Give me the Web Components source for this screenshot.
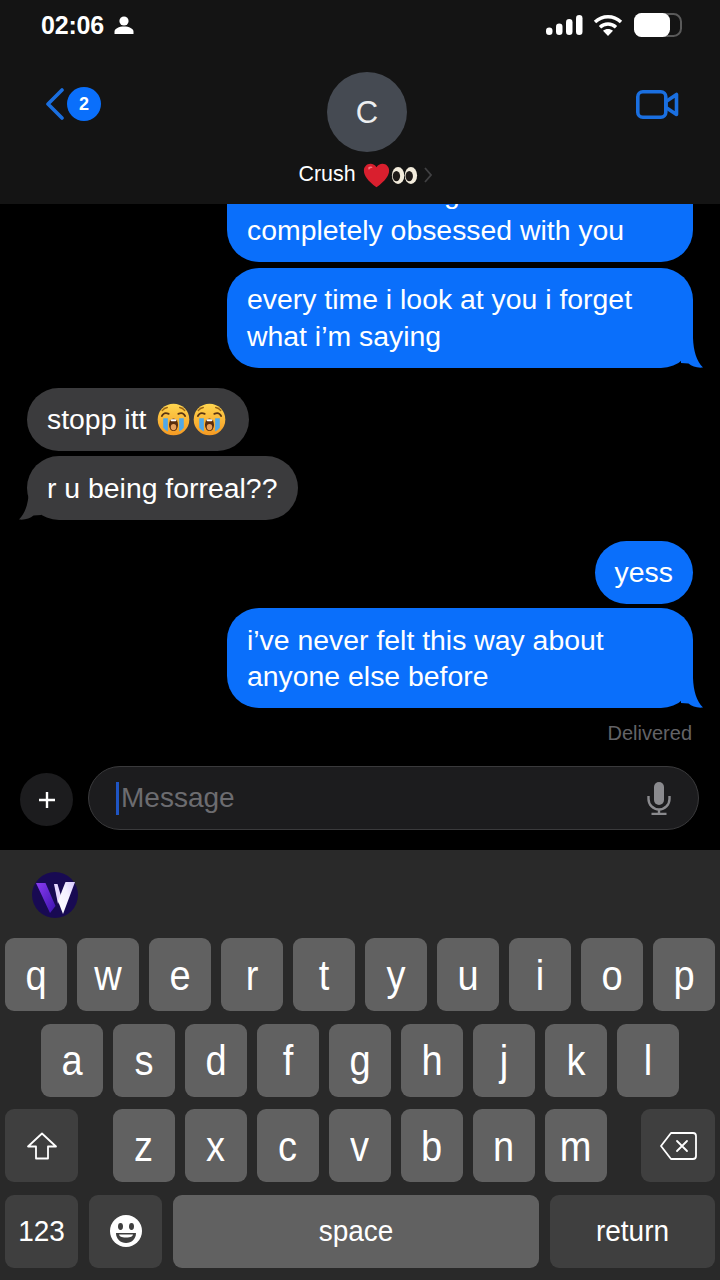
<!DOCTYPE html>
<html lang="en">
<head>
<meta charset="utf-8">
<title>Messages</title>
<style>
  html, body { margin: 0; background: #000; }
  body { font-family: "Liberation Sans", Arial, sans-serif; color: #fff; }
  chat-screen { width: 720px; height: 1280px; }
</style>
</head>
<body>
<chat-screen>
  <status-bar slot="top"></status-bar>
  <chat-header slot="top"></chat-header>

  <chat-bubble side="sent" hint="g">completely obsessed with you</chat-bubble>
  <chat-bubble side="sent" tail style="margin-top:1px">every time i look at you i forget<br>what i’m saying</chat-bubble>
  <chat-bubble side="received" style="margin-top:15px;padding-right:23px">stopp itt<chat-emoji name="cry" size="33" style="margin-left:11px"></chat-emoji><chat-emoji name="cry" size="33" style="margin-left:3px"></chat-emoji></chat-bubble>
  <chat-bubble side="received" tail style="padding-right:21px">r u being forreal??</chat-bubble>
  <chat-bubble side="sent" compact style="margin-top:16px">yess</chat-bubble>
  <chat-bubble side="sent" tail style="margin-top:-1px">i’ve never felt this way about<br>anyone else before</chat-bubble>
  <delivered-note>Delivered</delivered-note>

  <message-composer slot="composer"></message-composer>
  <on-screen-keyboard slot="keyboard"></on-screen-keyboard>
</chat-screen>

<script>
function tpl(html) {
  const t = document.createElement('template');
  t.innerHTML = html;
  return t;
}

class Base extends HTMLElement {
  connectedCallback() {
    if (this.shadowRoot) return;
    this.attachShadow({ mode: 'open' });
    this.shadowRoot.appendChild(this.constructor.template.content.cloneNode(true));
  }
}

class ChatScreen extends Base {
  static template = tpl(`
    <style>
      :host { display: flex; flex-direction: column; background: #000; overflow: hidden; }
      .top { flex: none; height: 204px; background: #141414; display: flex; flex-direction: column; }
      .messages {
        flex: none; height: 646px; overflow: hidden; box-sizing: border-box;
        display: flex; flex-direction: column; justify-content: flex-end;
      }
      .list { display: flex; flex-direction: column; gap: 5px; padding: 0 27px; }
    </style>
    <div class="top"><slot name="top"></slot></div>
    <div class="messages">
      <div class="list"><slot></slot></div>
      <slot name="composer"></slot>
    </div>
    <slot name="keyboard"></slot>
  `);
}

class StatusBar extends Base {
  static template = tpl(`
    <style>
      :host { display: flex; align-items: center; justify-content: space-between; height: 50px; padding: 0 38px 0 41px; }
      .time { display: flex; align-items: center; gap: 10px; font: 700 25px/1 "Liberation Sans", sans-serif; letter-spacing: -.2px; color: #fff; }
      .right { display: flex; align-items: center; gap: 10px; }
      svg { display: block; }
    </style>
    <div class="time">
      <span>02:06</span>
      <svg width="20" height="18" viewBox="0 0 20 18" fill="#fff"><circle cx="10" cy="5" r="4.600"/><path d="M0.500 18v-2.200C0.500 12.600 5 10.600 10 10.600s9.500 2 9.500 5.200V18z"/></svg>
    </div>
    <div class="right">
      <svg width="37" height="20" viewBox="0 0 37 20" fill="#fff"><rect x="0" y="12.500" width="6.500" height="7.500" rx="3.250"/><rect x="10" y="8.500" width="6.500" height="11.500" rx="3.250"/><rect x="20" y="4" width="6.500" height="16" rx="3.250"/><rect x="30" y="0" width="6.500" height="20" rx="3.250"/></svg>
      <svg width="30" height="22" viewBox="0 0 30 22" fill="none" stroke="#fff" stroke-width="3.400"><path d="M2 8C9.500 1 20.500 1 28 8"/><path d="M7 13.200C11.500 9 18.500 9 23 13.200"/><path d="M15 22l-5-5.200c2.800-2.400 7.200-2.400 10 0z" fill="#fff" stroke="none"/></svg>
      <svg width="48" height="24" viewBox="0 0 48 24" style="margin-left:1px"><rect x="1" y="1" width="46" height="22" rx="7.500" fill="none" stroke="#5a5a5a" stroke-width="2"/><rect x="0" y="0" width="36" height="24" rx="7.500" fill="#fff"/></svg>
    </div>
  `);
}

class ChatHeader extends Base {
  static template = tpl(`
    <style>
      :host { display: grid; grid-template-columns: 1fr auto 1fr; align-items: start; flex: 1; padding: 22px 35px 0 45px; }
      .back { display: flex; align-items: center; gap: 3px; margin-top: 15px; }
      .badge {
        width: 34px; height: 34px; border-radius: 50%; background: #0a6ffb; color: #fff;
        display: flex; align-items: center; justify-content: center; font: 700 18px/1 "Liberation Sans", sans-serif;
      }
      .who { display: flex; flex-direction: column; align-items: center; }
      .avatar {
        width: 80px; height: 80px; margin-left: 4px; border-radius: 50%; background: #454a52; color: #eceef0;
        display: flex; align-items: center; justify-content: center; font: 400 31px/1 "Liberation Sans", sans-serif;
      }
      .name { display: flex; align-items: center; margin-top: 10px; height: 26px; font: 400 21.400px/1 "Liberation Sans", sans-serif; color: #fff; }
      .name chat-emoji { margin-left: 7px; }
      .name chat-emoji + chat-emoji { margin-left: 1px; }
      .name svg { margin-left: 6px; }
      .video { justify-self: end; margin: 18px 6px 0 0; }
      svg { display: block; }
    </style>
    <div class="back">
      <svg width="19" height="32" viewBox="0 0 19 32" fill="none" stroke="#1a6fe0" stroke-width="3.600" stroke-linecap="round" stroke-linejoin="round"><path d="M17 2L3 16l14 14"/></svg>
      <span class="badge">2</span>
    </div>
    <div class="who">
      <div class="avatar">C</div>
      <div class="name">Crush<chat-emoji name="heart" size="27"></chat-emoji><chat-emoji name="eyes" size="27"></chat-emoji>
        <svg width="8" height="16" viewBox="0 0 8 16" fill="none" stroke="#404042" stroke-width="1.800"><path d="M1 1l6 7-6 7"/></svg>
      </div>
    </div>
    <svg class="video" width="43" height="29" viewBox="0 0 43 29" fill="none" stroke="#1a6fe0" stroke-width="3.600" stroke-linejoin="round"><rect x="1.800" y="1.800" width="28" height="25.400" rx="5"/><path d="M30 11.500l10.500-7v20l-10.500-7z"/></svg>
  `);
}

class ChatBubble extends Base {
  static template = tpl(`
    <style>
      :host { display: block; align-self: flex-start; position: relative; box-sizing: border-box;
        padding: 13.500px 20px; border-radius: 32px; background: #3b3b3d; color: #fff;
        font: 400 28.400px/36.500px "Liberation Sans", sans-serif; white-space: nowrap; }
      :host([side="sent"]) { align-self: flex-end; background: #0a6ffb; width: 466px; }
      :host([compact]) { width: auto !important; }
      svg { position: absolute; bottom: 0; width: 22px; height: 34px; fill: #0a6ffb; display: block; }
      .r { right: -10px; }
      .l { left: -8px; fill: #3b3b3d; transform: scaleX(-1); }
      .hint { display: block; padding-left: 197px; }
    </style>
    <slot></slot>
  `);

  connectedCallback() {
    super.connectedCallback();
    const hint = this.getAttribute('hint');
    if (hint) {
      const h = document.createElement('span');
      h.className = 'hint';
      h.textContent = hint;
      this.shadowRoot.insertBefore(h, this.shadowRoot.querySelector('slot'));
    }
    if (this.hasAttribute('tail')) {
      const cls = this.getAttribute('side') === 'sent' ? 'r' : 'l';
      const t = tpl(`<svg class="${cls}" viewBox="0 0 22 34"><path d="M0 0h12v4c.5 13 3.500 23 10 29.600-6 .6-11-1-14.500-4L0 29z"/></svg>`);
      this.shadowRoot.appendChild(t.content.cloneNode(true));
    }
  }
}

class DeliveredNote extends Base {
  static template = tpl(`
    <style>
      :host { display: block; text-align: right; margin: 5px 1px 18px 0; color: #636367; font: 400 20px/30px "Liberation Sans", sans-serif; }
    </style>
    <slot></slot>
  `);
}

class ChatEmoji extends HTMLElement {
  connectedCallback() {
    if (this.shadowRoot) return;
    const size = this.getAttribute('size') || 36;
    const art = {
      heart: `<path d="M12 22.500C4 16.500 .8 12 .8 7.500 .8 4 3.500 1.500 6.600 1.500c2.300 0 4.300 1.200 5.400 3.200 1.100-2 3.100-3.200 5.400-3.200 3.100 0 5.800 2.500 5.800 6 0 4.500-3.200 9-11.200 15z" fill="#d91f2e"/><path d="M5 4.500c1.500-1 3-.5 3.500.5-1.500 0-2.500.8-3.200 2-.8-.8-.8-1.800-.3-2.500z" fill="#f47a80"/>`,
      eyes: `<ellipse cx="6.300" cy="12" rx="5.500" ry="7.500" fill="#f3ecdc"/><ellipse cx="17.700" cy="12" rx="5.500" ry="7.500" fill="#f3ecdc"/><ellipse cx="4.800" cy="12.500" rx="3.300" ry="4.600" fill="#1e1a18"/><ellipse cx="16.200" cy="12.500" rx="3.300" ry="4.600" fill="#1e1a18"/>`,
      cry: `<defs><linearGradient id="f" x1="0" y1="0" x2="0" y2="1"><stop offset="0" stop-color="#ffd64f"/><stop offset="1" stop-color="#f59a23"/></linearGradient></defs>
        <circle cx="12" cy="12" r="11.500" fill="url(#f)"/>
        <path d="M4.500 11h3.400v9.800a11 11 0 0 1-3.400-2.800z" fill="#4fa8e8"/><path d="M16.100 11h3.400v7a11 11 0 0 1-3.400 2.800z" fill="#4fa8e8"/>
        <path d="M3.500 9.500c1-2 3-2.600 5-1.600M15.500 7.900c2-1 4-.4 5 1.600" stroke="#5a3512" stroke-width="1.300" fill="none" stroke-linecap="round"/>
        <path d="M3.800 5.500c1-1.300 2.300-2 3.700-2.200M16.500 3.300c1.400.2 2.700.9 3.700 2.200" stroke="#9a6414" stroke-width="1" fill="none" stroke-linecap="round"/>
        <ellipse cx="12" cy="15.800" rx="3.300" ry="4.600" fill="#5a2d0c"/><ellipse cx="12" cy="17.500" rx="2" ry="2.300" fill="#e8a15c"/><rect x="9.900" y="11.800" width="4.200" height="1.400" rx=".7" fill="#fff"/>`
    }[this.getAttribute('name')];
    this.attachShadow({ mode: 'open' }).innerHTML = `
      <style>:host { display: inline-block; width: ${size}px; height: ${size}px; vertical-align: -7px; } svg { display: block; width: 100%; height: 100%; }</style>
      <svg viewBox="0 0 24 24">${art}</svg>`;
  }
}

class MessageComposer extends Base {
  static template = tpl(`
    <style>
      :host { display: flex; align-items: center; gap: 15px; flex: none; height: 64px; padding: 0 21px 20px 20px; }
      .plus {
        flex: none; width: 53px; height: 53px; border-radius: 50%; background: #1c1c1e; margin-top: 3px;
        display: flex; align-items: center; justify-content: center;
      }
      .field {
        flex: 1; height: 64px; box-sizing: border-box; border: 1.500px solid #3a3a3c; border-radius: 32px; background: #1c1c1e;
        display: flex; align-items: center; padding: 0 27px;
      }
      .caret { width: 3px; height: 33px; background: #1f55c4; margin-right: 2px; flex: none; }
      .ph { flex: 1; color: #6c6c70; font: 400 28px/1 "Liberation Sans", sans-serif; }
      svg { display: block; }
    </style>
    <div class="plus"><svg width="16" height="16" viewBox="0 0 16 16" stroke="#fff" stroke-width="2.400"><path d="M8 0v16M0 8h16"/></svg></div>
    <div class="field">
      <span class="caret"></span>
      <span class="ph">Message</span>
      <svg width="24" height="33" viewBox="0 0 24 33" fill="none" stroke="#8a8a8e" stroke-width="2.400"><rect x="7" y="0" width="10" height="23" rx="5" fill="#8a8a8e" stroke="none"/><path d="M1.500 14v3a10.500 10.500 0 0 0 21 0v-3"/><path d="M12 27.500V31M4.500 32h15"/></svg>
    </div>
  `);
}

class KbKey extends Base {
  static template = tpl(`
    <style>
      :host { display: flex; align-items: center; justify-content: center; box-sizing: border-box; flex: none;
        width: 62px; height: 73px; border-radius: 9px; background: #616161; color: #fff;
        font: 400 38px/1 "Liberation Sans", sans-serif; }
      :host([mod]) { background: #3f3f3f; }
      :host([small]) { font-size: 28px; }
      :host([wide]) { width: 73px; }
      .cap { display: block; transform: scaleY(1.12); }
      :host([small]) .cap { transform: scaleY(1.06); }
      :host([icon]) .cap { transform: none; }
    </style>
    <span class="cap"><slot></slot></span>
  `);
}

class OnScreenKeyboard extends Base {
  static template = tpl(`
    <style>
      :host { display: flex; flex-direction: column; flex: 1; background: #292929; padding: 22px 5px 0; box-sizing: border-box; }
      .logo { display: block; margin-left: 27px; }
      .rows { display: flex; flex-direction: column; gap: 12.500px; margin-top: 20px; }
      .row { display: flex; gap: 10px; }
      .row.two { padding-left: 36px; }
      .row.three { justify-content: space-between; }
      .letters { display: flex; gap: 10px; }
      svg { display: block; }
    </style>
    <svg class="logo" width="46" height="46" viewBox="0 0 46 46">
      <defs><linearGradient id="w" x1="0" y1="0" x2="1" y2="1"><stop offset="0" stop-color="#8a3cf0"/><stop offset="1" stop-color="#3c12b0"/></linearGradient>
      <linearGradient id="w2" x1="0" y1="1" x2="1" y2="0"><stop offset="0" stop-color="#fff"/><stop offset=".6" stop-color="#f4f0ff"/><stop offset="1" stop-color="#d8c8ff"/></linearGradient></defs>
      <circle cx="23" cy="23" r="23" fill="#180a52"/>
      <path d="M4 11h9.500l10 23-5.500 7z" fill="url(#w)"/>
      <path d="M22 12h3.500L29 24l-3 8z" fill="#e6d8ff"/>
      <path d="M31 42L43 10h-9.500L26 29z" fill="url(#w2)"/>
    </svg>
    <div class="rows" id="rows"></div>
  `);

  connectedCallback() {
    super.connectedCallback();
    const row = (keys, cls = '') => `<div class="row ${cls}">${keys.split('').map(k => `<kb-key>${k}</kb-key>`).join('')}</div>`;
    const shift = `<svg style="display:block" width="32" height="28" viewBox="0 0 32 28" fill="none" stroke="#fff" stroke-width="1.800" stroke-linejoin="round"><path d="M16 1.500L2 14.500h8V26.500h12V14.500h8z"/></svg>`;
    const del = `<svg style="display:block" width="37" height="28" viewBox="0 0 37 28" fill="none" stroke="#fff" stroke-width="1.800" stroke-linejoin="round"><path d="M11 1h22a3 3 0 0 1 3 3v20a3 3 0 0 1-3 3H11L1 14z"/><path d="M17 9l10 10M27 9L17 19" stroke-linecap="round"/></svg>`;
    const face = `<svg style="display:block" width="32" height="32" viewBox="0 0 32 32"><circle cx="16" cy="16" r="16" fill="#fff"/><ellipse cx="10.500" cy="11.500" rx="2.500" ry="3.400" fill="#3f3f3f"/><ellipse cx="21.500" cy="11.500" rx="2.500" ry="3.400" fill="#3f3f3f"/><path d="M6 18h20c0 6-4.500 10-10 10S6 24 6 18z" fill="#3f3f3f"/><path d="M9 19.500h14c-.5 2-2 3-7 3s-6.500-1-7-3z" fill="#fff"/></svg>`;
    this.shadowRoot.getElementById('rows').innerHTML =
      row('qwertyuiop') +
      row('asdfghjkl', 'two') +
      `<div class="row three">
        <kb-key mod wide icon>${shift}</kb-key>
        <div class="letters">${'zxcvbnm'.split('').map(k => `<kb-key>${k}</kb-key>`).join('')}</div>
        <kb-key mod wide icon style="width:74px">${del}</kb-key>
      </div>` +
      `<div class="row" style="gap:11px">
        <kb-key mod wide small>123</kb-key>
        <kb-key mod wide icon>${face}</kb-key>
        <kb-key small style="width:366px">space</kb-key>
        <kb-key mod small style="width:165px">return</kb-key>
      </div>`;
  }
}

customElements.define('chat-screen', ChatScreen);
customElements.define('status-bar', StatusBar);
customElements.define('chat-header', ChatHeader);
customElements.define('chat-bubble', ChatBubble);
customElements.define('delivered-note', DeliveredNote);
customElements.define('chat-emoji', ChatEmoji);
customElements.define('message-composer', MessageComposer);
customElements.define('kb-key', KbKey);
customElements.define('on-screen-keyboard', OnScreenKeyboard);
</script>
</body>
</html>
